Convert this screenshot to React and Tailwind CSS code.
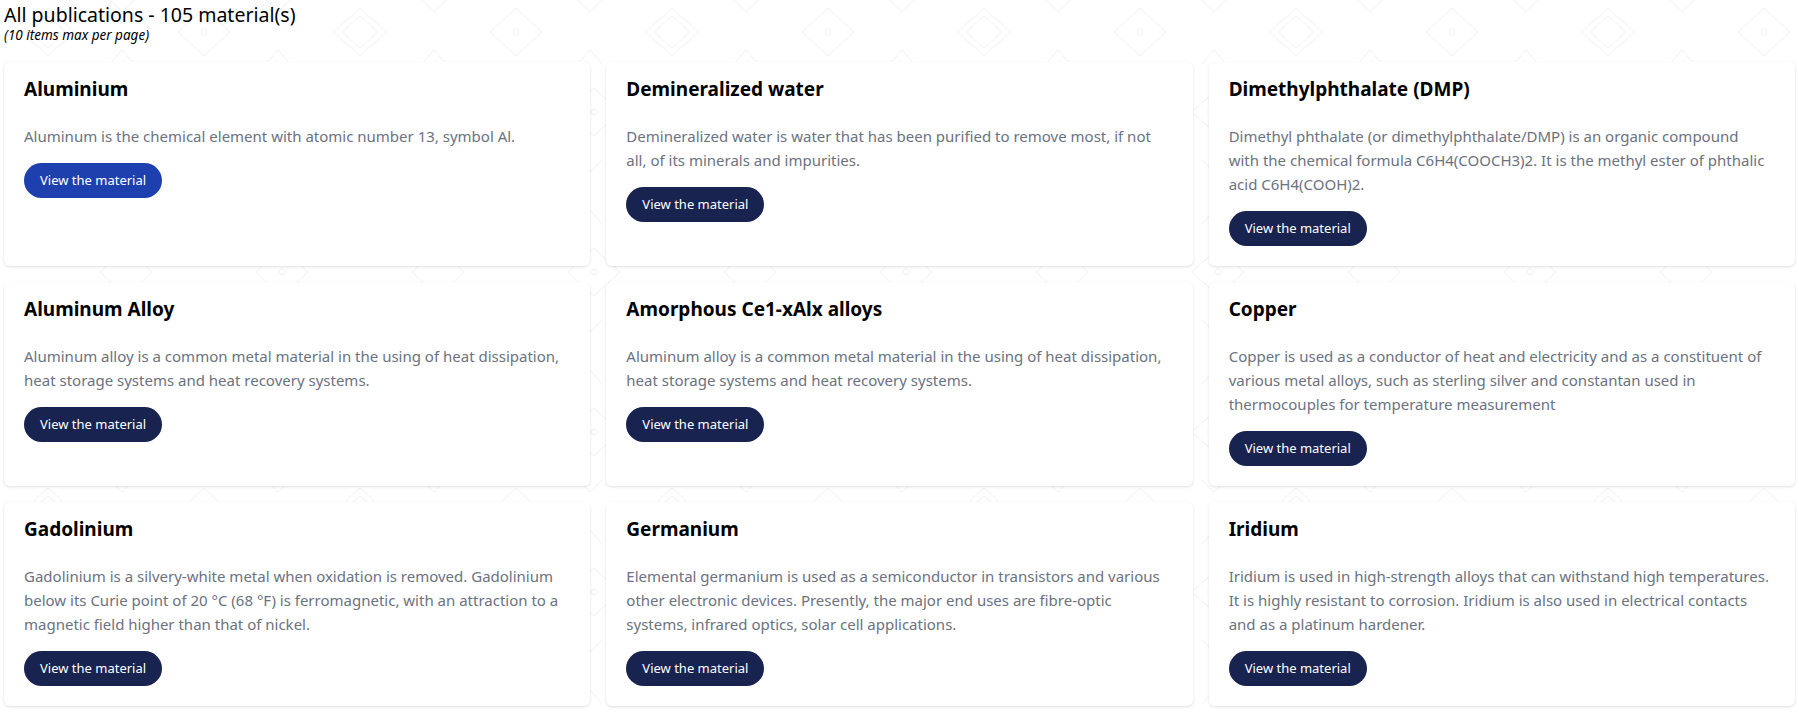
import React from 'react';

const materials = [
  {
    name: 'Aluminium',
    text: 'Aluminum is the chemical element with atomic number 13, symbol Al.',
    active: true,
  },
  {
    name: 'Demineralized water',
    text: 'Demineralized water is water that has been purified to remove most, if not all, of its minerals and impurities.',
  },
  {
    name: 'Dimethylphthalate (DMP)',
    text: 'Dimethyl phthalate (or dimethylphthalate/DMP) is an organic compound with the chemical formula C6H4(COOCH3)2. It is the methyl ester of phthalic acid C6H4(COOH)2.',
  },
  {
    name: 'Aluminum Alloy',
    text: 'Aluminum alloy is a common metal material in the using of heat dissipation, heat storage systems and heat recovery systems.',
  },
  {
    name: 'Amorphous Ce1-xAlx alloys',
    text: 'Aluminum alloy is a common metal material in the using of heat dissipation, heat storage systems and heat recovery systems.',
  },
  {
    name: 'Copper',
    text: 'Copper is used as a conductor of heat and electricity and as a constituent of various metal alloys, such as sterling silver and constantan used in thermocouples for temperature measurement',
  },
  {
    name: 'Gadolinium',
    text: 'Gadolinium is a silvery-white metal when oxidation is removed. Gadolinium below its Curie point of 20 °C (68 °F) is ferromagnetic, with an attraction to a magnetic field higher than that of nickel.',
  },
  {
    name: 'Germanium',
    text: 'Elemental germanium is used as a semiconductor in transistors and various other electronic devices. Presently, the major end uses are fibre-optic systems, infrared optics, solar cell applications.',
  },
  {
    name: 'Iridium',
    text: 'Iridium is used in high-strength alloys that can withstand high temperatures. It is highly resistant to corrosion. Iridium is also used in electrical contacts and as a platinum hardener.',
  },
];

// faint diamond pattern behind the page
const Pattern = () => (
  <svg className="absolute inset-0 w-full h-full pointer-events-none" aria-hidden="true">
    <defs>
      <pattern id="diamonds" width="312" height="160" patternUnits="userSpaceOnUse">
        <g fill="none" stroke="#f0f0f3" strokeWidth="1">
          <path d="M48 8 L74 32 L48 56 L22 32 Z" />
          <path d="M48 16 L66 32 L48 48 L30 32 Z" />
          <path d="M204 8 L230 32 L204 56 L178 32 Z" />
          <circle cx="204" cy="32" r="3" />
          <path d="M110 0 L122 12 L134 0" />
          <path d="M110 64 L122 50 L134 64" />
          <path d="M266 0 L278 12 L290 0" />
          <path d="M266 64 L278 50 L290 64" />
          <path d="M126 88 L152 112 L126 136 L100 112 Z" />
          <path d="M282 88 L308 112 L282 136 L256 112 Z" />
          <circle cx="282" cy="112" r="3" />
          <path d="M32 80 L44 92 L56 80" />
          <path d="M32 144 L44 130 L56 144" />
          <path d="M188 80 L200 92 L212 80" />
          <path d="M188 144 L200 130 L212 144" />
        </g>
      </pattern>
    </defs>
    <rect width="100%" height="100%" fill="url(#diamonds)" />
  </svg>
);

const MaterialCard = ({ name, text, active }) => (
  <div className="flex flex-col bg-white rounded-md shadow-[0_1px_3px_rgba(0,0,0,0.13)] pl-5 pr-[26px] pt-4 pb-5">
    <h3 className="text-[19px] leading-[23px] font-bold text-black">{name}</h3>
    <p className="mt-[23px] text-[15px] leading-6 text-[#6b7280]">{text}</p>
    <button
      className={`mt-[15px] self-start h-[35px] px-4 rounded-full text-[13px] text-white ${
        active ? 'bg-[#1e40af]' : 'bg-[#18234f]'
      }`}
    >
      View the material
    </button>
  </div>
);

const App = () => {
  return (
    <div className="relative min-h-screen bg-white font-['Noto_Sans',sans-serif]">
      <Pattern />
      <div className="relative px-1 pt-[3px] pb-2">
        <h1 className="text-[19.5px] leading-6 text-black">All publications - 105 material(s)</h1>
        <p className="text-[13.5px] leading-4 italic text-black">(10 items max per page)</p>

        <div className="mt-[19px] grid grid-cols-3 gap-4">
          {materials.map((m) => (
            <MaterialCard key={m.name} {...m} />
          ))}
        </div>
      </div>
    </div>
  );
};

export default App;
